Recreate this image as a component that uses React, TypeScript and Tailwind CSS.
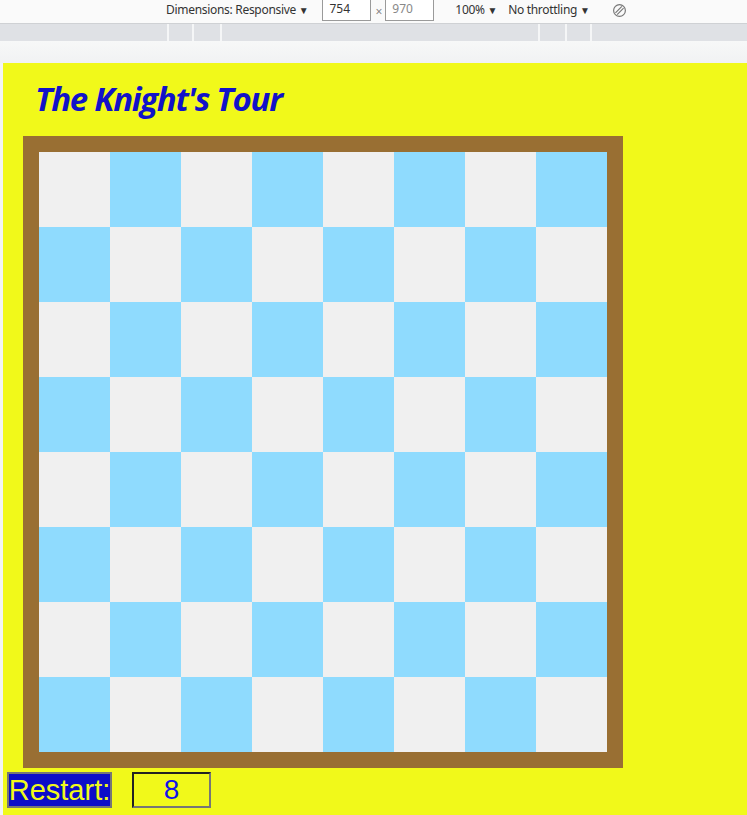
import React from "react";

export default function App() {
  const rows = Array.from({ length: 8 }, (_, r) => r);
  const cols = Array.from({ length: 8 }, (_, c) => c);
  return (
    <div className="w-[747px] h-[815px] overflow-hidden bg-[#f3f4f5] flex flex-col" style={{ fontFamily: "'Open Sans', sans-serif" }}>
      {/* devtools toolbar */}
      <div className="h-[24px] bg-[#fafafa] border-b border-[#cfd1d4] flex items-start text-[12px] text-[#333] shrink-0">
        <div className="ml-[166px] mt-[2px] leading-[16px] tracking-[-0.3px]" style={{ fontFamily: "'Noto Sans', sans-serif" }}>
          Dimensions: Responsive <span className="text-[10px]">▼</span>
        </div>
        <div className="ml-[14px] w-[49px] h-[21px] border border-[#9a9a9a] border-t-0 bg-white pl-[6px] leading-[18px]" style={{ fontFamily: "'Noto Sans', sans-serif" }}>754</div>
        <div className="ml-[4px] mt-[4px] text-[#777] leading-[16px]">×</div>
        <div className="ml-[3px] w-[49px] h-[21px] border border-[#9a9a9a] border-t-0 bg-white pl-[6px] leading-[18px] text-[#888]" style={{ fontFamily: "'Noto Sans', sans-serif" }}>970</div>
        <div className="ml-[21px] mt-[2px] leading-[16px] tracking-[-0.3px]" style={{ fontFamily: "'Noto Sans', sans-serif" }}>
          100% <span className="text-[10px]">▼</span>
        </div>
        <div className="ml-[11px] mt-[2px] leading-[16px] tracking-[-0.3px]" style={{ fontFamily: "'Noto Sans', sans-serif" }}>
          No throttling <span className="text-[10px]">▼</span>
        </div>
        <svg className="ml-[22px] mt-[3px]" width="15" height="15" viewBox="0 0 14 14" fill="none" stroke="#777" strokeWidth="1.1">
          <circle cx="7" cy="7" r="5.5" />
          <path d="M3.2 9.2 L9.2 3.2 M4.8 10.8 L10.8 4.8" />
        </svg>
      </div>
      {/* ruler */}
      <div className="h-[17px] bg-[#dfe1e5] flex shrink-0">
        <div className="w-[167px]" />
        <div className="w-[2px] bg-[#f5f6f7]" />
        <div className="w-[23px]" />
        <div className="w-[2px] bg-[#f5f6f7]" />
        <div className="w-[26px]" />
        <div className="w-[2px] bg-[#f5f6f7]" />
        <div className="w-[316px]" />
        <div className="w-[2px] bg-[#f5f6f7]" />
        <div className="w-[25px]" />
        <div className="w-[2px] bg-[#f5f6f7]" />
        <div className="w-[23px]" />
        <div className="w-[2px] bg-[#f5f6f7]" />
      </div>
      <div className="h-[22px] bg-gradient-to-b from-[#f7f8f8] to-[#f1f2f3] shrink-0" />
      {/* page */}
      <div className="ml-[3px] flex-1 bg-[#f1f91a] flex flex-col">
        <h1
          className="ml-[32px] mt-[16px] h-[57px] text-[33px] leading-[40px] font-bold italic text-[#1212c8] tracking-[-1.3px]"
          style={{ fontFamily: "'Open Sans', sans-serif" }}
        >
          The Knight's Tour
        </h1>
        <div className="ml-[20px] w-[600px] h-[632px] bg-[#996f33] p-[16px]">
          <div className="grid grid-cols-[repeat(8,71px)] grid-rows-[repeat(8,75px)]">
            {rows.map((r) =>
              cols.map((c) => (
                <div key={`${r}-${c}`} className={(r + c) % 2 === 0 ? "bg-[#f0f0f0]" : "bg-[#8fdbfe]"} />
              ))
            )}
          </div>
        </div>
        <div className="flex mt-[4px] ml-[4px] items-start">
          <button
            className="w-[105px] h-[36px] bg-[#0c0cc8] text-[#f1f91a] text-[29px] leading-[30px] border-2 border-[#767676] flex items-center justify-center"
            style={{ fontFamily: "'Liberation Sans', Arial, sans-serif" }}
          >
            Restart:
          </button>
          <div
            className="ml-[20px] w-[79px] h-[36px] border-2 border-t-[#222] border-l-[#222] border-b-[#767676] border-r-[#767676] text-[#1212e8] text-[28px] leading-[30px] flex items-center justify-center"
            style={{ fontFamily: "'Liberation Sans', Arial, sans-serif" }}
          >
            8
          </div>
        </div>
      </div>
    </div>
  );
}
